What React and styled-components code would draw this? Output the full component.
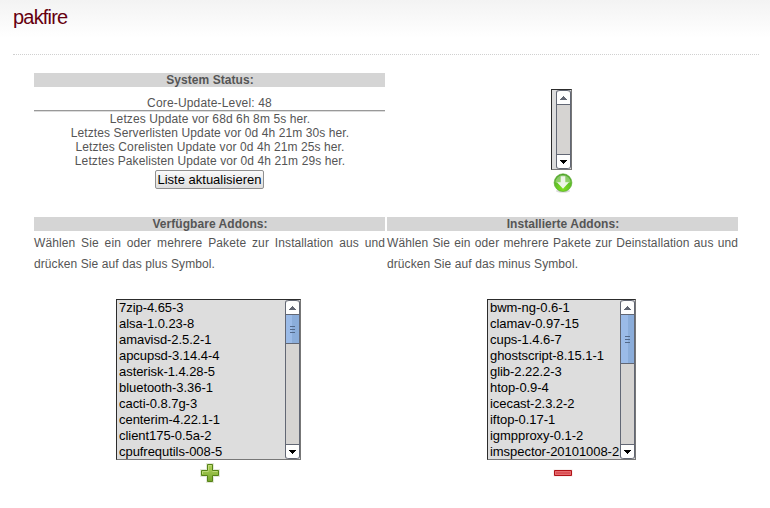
import React from "react";
import styled, { createGlobalStyle } from "styled-components";

const GlobalStyle = createGlobalStyle`
  * { box-sizing: border-box; }
  body {
    margin: 0;
    background: #fff;
    color: #555;
    font: 12px/14px "Liberation Sans", Arial, sans-serif;
  }
`;

const Page = styled.main`
  height: 508px;
  padding: 0 11px 0 13px;
  overflow: hidden;
  background: linear-gradient(#f3f3f3, #fff 38px);
`;

const Header = styled.header`
  height: 55px;
  padding-top: 5px;
  border-bottom: 1px dotted #d0d0d0;
`;

const Title = styled.h1`
  margin: 0;
  font-size: 20px;
  font-weight: 400;
  line-height: 24px;
  letter-spacing: -0.8px;
  color: #66000f;
`;

const Columns = styled.div`
  display: grid;
  grid-template-columns: 351px 351px;
  grid-template-rows: 144px auto;
  column-gap: 2px;
  padding: 18px 0 0 21px;
`;

const Cell = styled.section`
  display: flex;
  flex-direction: column;
  align-items: center;
  padding-top: ${(p) => p.$top || 0}px;
`;

const Heading = styled.h2`
  width: 100%;
  height: 14px;
  margin: 0;
  background: #d5d5d5;
  font-size: 12px;
  font-weight: 700;
  line-height: 14px;
  letter-spacing: 0.05px;
  text-indent: 1px;
  text-align: center;
`;

const Level = styled.div`
  width: 100%;
  height: 15px;
  margin: 9px 0 1px;
  border-bottom: 1px solid #999;
  box-shadow: 0 1px #dcdcdc;
  letter-spacing: 0.16px;
  text-align: center;
`;

const StatusLine = styled.div`
  padding-left: 1px;
  letter-spacing: 0.1px;
  white-space: nowrap;
`;

const RefreshButton = styled.button`
  width: 109px;
  height: 19px;
  margin-top: 2px;
  padding: 0;
  border: 1px solid #8f8f8f;
  border-radius: 2px;
  background: linear-gradient(#fafafa, #dedede);
  color: #000;
  font: 13px/16px "Liberation Sans", Arial, sans-serif;
  white-space: nowrap;
`;

const Hint = styled.p`
  width: 100%;
  height: 68px;
  margin: 0;
  padding-top: 2px;
  line-height: 21px;
  letter-spacing: 0.09px;
  text-align: justify;
`;

const ListBox = styled.div`
  display: flex;
  justify-content: space-between;
  width: ${(p) => p.$width}px;
  height: ${(p) => p.$height}px;
  margin-right: 2px;
  border: 1px solid #2c2c2c;
  border-right-color: #777;
  border-bottom-color: #777;
  background: #ddd;
`;

const Options = styled.ul`
  width: 0;
  margin: 0;
  padding: 0 0 0 2px;
  list-style: none;
  color: #000;
  font-size: 13px;
  line-height: 16px;
  letter-spacing: -0.05px;
  white-space: nowrap;
`;

const Bar = styled.div`
  display: flex;
  flex-direction: column;
  width: 15px;
  height: 100%;
  border-left: 1px solid #626774;
  border-right: 1px solid #626774;
  border-radius: 3px;
  background: #d6d4d2;
`;

const ArrowButton = styled.div`
  display: flex;
  align-items: center;
  justify-content: center;
  flex: none;
  height: 15px;
  border: solid #626774;
  border-width: 1px 0;
  border-radius: ${(p) => (p.$down ? "0 0 3px 3px" : "3px 3px 0 0")};
  background: #fefefe;
`;

const Thumb = styled.div`
  display: flex;
  align-items: center;
  justify-content: center;
  height: ${(p) => p.$height}px;
  border-bottom: 1px solid #626774;
  background: linear-gradient(90deg, #9bbbe8 0 50%, #8badda 50%);
`;

const Spacer = styled.div`
  flex: 1;
`;

const Icon = styled.svg`
  display: block;
  flex: none;
  margin-top: ${(p) => p.$gap || 0}px;
`;

function Arrow({ down }) {
  return (
    <ArrowButton $down={down}>
      <Icon width="7" height="4" shapeRendering="crispEdges">
        <path
          d={down ? "M0 0h7v1h-1v1h-1v1h-1v1h-1v-1h-1v-1h-1v-1h-1z" : "M3 0h1v1h1v1h1v1h1v1h-7v-1h1v-1h1v-1h1z"}
          fill={down ? "#000" : "#626774"}
        />
      </Icon>
    </ArrowButton>
  );
}

function SelectList({ items = [], width, height, thumb }) {
  return (
    <ListBox $width={width} $height={height}>
      <Options>
        {items.map((item) => (
          <li key={item}>{item}</li>
        ))}
      </Options>
      <Bar>
        <Arrow />
        {thumb && (
          <Thumb $height={thumb}>
            <Icon width="5" height="7" shapeRendering="crispEdges">
              <path d="M0 0h5v1H0zM0 3h5v1H0zM0 6h5v1H0z" fill="#53698a" />
            </Icon>
          </Thumb>
        )}
        <Spacer />
        <Arrow down />
      </Bar>
    </ListBox>
  );
}

function DownloadIcon() {
  return (
    <Icon width="20" height="20" viewBox="0 0 20 20" $gap={3}>
      <defs>
        <radialGradient id="orb" cx="50%" cy="80%" r="80%">
          <stop offset="0" stopColor="#7fe01e" />
          <stop offset=".55" stopColor="#62c128" />
          <stop offset="1" stopColor="#4a9f26" />
        </radialGradient>
      </defs>
      <ellipse cx="10" cy="18" rx="7" ry="1.8" fill="#ddd" />
      <circle cx="10" cy="9.7" r="8.9" fill="url(#orb)" stroke="#55a82a" strokeWidth=".6" />
      <path d="M2.4 9.5a7.6 7.6 0 0 1 15.2 0q-7.600 2-15.200 0z" fill="#fff" opacity=".3" />
      <path d="M7.700 3.300h4.600v6h3.700L10 15.800 4 9.300h3.700z" fill="#eef5e8" />
    </Icon>
  );
}

function PlusIcon() {
  return (
    <Icon width="20" height="20" viewBox="0 0 20 20" $gap={3}>
      <defs>
        <linearGradient id="leaf" x2="0" y2="1">
          <stop offset="0" stopColor="#b4d55e" />
          <stop offset="1" stopColor="#75a52b" />
        </linearGradient>
      </defs>
      <path d="M7 1h6v6h6v6h-6v6H7v-6H1V7h6z" fill="none" stroke="#e3e8da" strokeWidth="2" />
      <path d="M7.500 1.500h5v6h6v5h-6v6h-5v-6h-6v-5h6z" fill="url(#leaf)" stroke="#568317" />
      <path d="M8.500 7.500v-5h3M2.500 11V8.500h6M12.500 8.500h5" fill="none" stroke="#cce38c" strokeWidth=".7" />
    </Icon>
  );
}

function MinusIcon() {
  return (
    <Icon width="20" height="20" viewBox="0 0 20 20" $gap={3}>
      <path d="M.5 6.5h19v7H.5z" fill="#f1e4e3" />
      <path d="M1.5 7.5h17v5h-17z" fill="#dc5257" stroke="#b11218" />
      <path d="M2.5 8.5h15v3h-15z" fill="none" stroke="#e9787a" strokeWidth=".7" />
    </Icon>
  );
}

const updates = [
  "Letzes Update vor 68d 6h 8m 5s her.",
  "Letztes Serverlisten Update vor 0d 4h 21m 30s her.",
  "Letztes Corelisten Update vor 0d 4h 21m 25s her.",
  "Letztes Pakelisten Update vor 0d 4h 21m 29s her.",
];

const available = [
  "7zip-4.65-3", "alsa-1.0.23-8", "amavisd-2.5.2-1", "apcupsd-3.14.4-4", "asterisk-1.4.28-5",
  "bluetooth-3.36-1", "cacti-0.8.7g-3", "centerim-4.22.1-1", "client175-0.5a-2", "cpufrequtils-008-5",
];

const installed = [
  "bwm-ng-0.6-1", "clamav-0.97-15", "cups-1.4.6-7", "ghostscript-8.15.1-1", "glib-2.22.2-3",
  "htop-0.9-4", "icecast-2.3.2-2", "iftop-0.17-1", "igmpproxy-0.1-2", "imspector-20101008-2",
];

export default function App() {
  return (
    <>
      <GlobalStyle />
      <Page>
        <Header>
          <Title>pakfire</Title>
        </Header>
        <Columns>
          <Cell>
            <Heading>System Status:</Heading>
            <Level>Core-Update-Level: 48</Level>
            {updates.map((line) => (
              <StatusLine key={line}>{line}</StatusLine>
            ))}
            <RefreshButton>Liste aktualisieren</RefreshButton>
          </Cell>
          <Cell $top={16}>
            <SelectList width={21} height={81} />
            <DownloadIcon />
          </Cell>
          <Cell>
            <Heading>Verfügbare Addons:</Heading>
            <Hint>Wählen Sie ein oder mehrere Pakete zur Installation aus und drücken Sie auf das plus Symbol.</Hint>
            <SelectList items={available} width={185} height={161} thumb={29} />
            <PlusIcon />
          </Cell>
          <Cell>
            <Heading>Installierte Addons:</Heading>
            <Hint>Wählen Sie ein oder mehrere Pakete zur Deinstallation aus und drücken Sie auf das minus Symbol.</Hint>
            <SelectList items={installed} width={149} height={161} thumb={49} />
            <MinusIcon />
          </Cell>
        </Columns>
      </Page>
    </>
  );
}
